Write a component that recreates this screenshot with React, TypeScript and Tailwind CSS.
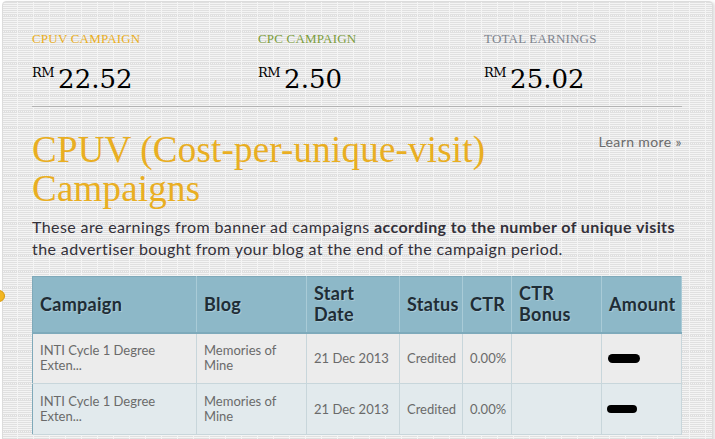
import React from 'react';

const serif = "font-['Liberation_Serif',serif]";
const figure = "font-['DejaVu_Serif',serif]";
const sans = "font-['Lato','Open_Sans',sans-serif]";

type Row = {
  campaign: string[];
  blog: string[];
  date: string;
  status: string;
  ctr: string;
  blob: string;
  bg: string;
};

const rows: Row[] = [
  {
    campaign: ['INTI Cycle 1 Degree', 'Exten...'],
    blog: ['Memories of', 'Mine'],
    date: '21 Dec 2013',
    status: 'Credited',
    ctr: '0.00%',
    blob: 'w-[32px] h-[9px] ml-[-1px]',
    bg: 'bg-[#ececec]',
  },
  {
    campaign: ['INTI Cycle 1 Degree', 'Exten...'],
    blog: ['Memories of', 'Mine'],
    date: '21 Dec 2013',
    status: 'Credited',
    ctr: '0.00%',
    blob: 'w-[30px] h-[8px] ml-[-2px]',
    bg: 'bg-[#e2eaed]',
  },
];

const Stat: React.FC<{ label: string; color: string; amount: string }> = ({ label, color, amount }) => (
  <div>
    <div className={`${serif} text-[13px] leading-[15px] tracking-[0.2px] ${color}`}>{label}</div>
    <div className={`${figure} mt-[17px] flex items-start text-black`}>
      <span className="mt-[2px] mr-[4px] text-[13px] leading-4 tracking-[-0.5px]">RM</span>
      <span className="text-[26px] leading-[32px]">{amount}</span>
    </div>
  </div>
);

const headCell = 'border-r border-[#a9cbd7] px-[7px] text-left align-middle font-bold text-[18px] leading-[21px] tracking-[0.3px] text-[#1f2d36] [text-shadow:1px_1px_0_rgba(255,255,255,0.25)]';
const bodyCell = 'border-r border-b border-[#c8d6db] px-[7px] align-middle text-[13px] leading-[15px] text-[#6a6a6a]';

const App: React.FC = () => {
  return (
    <div className="relative min-h-screen overflow-hidden bg-white">
      <div className="ml-[2px] mt-[1px] w-[711px] rounded-t-[4px] border border-[#dcdcdc] bg-[#f4f4f4] bg-[conic-gradient(from_90deg_at_1px_1px,transparent_75%,#e0e0e0_0),conic-gradient(from_90deg_at_1px_1px,transparent_75%,#e0e0e0_0)] bg-size-[16px_2px,2px_16px] bg-position-[14px_0px,0px_13px] px-[29px] pt-[29px] pb-10 shadow-[2px_1px_3px_rgba(0,0,0,0.12)]">
        <div className="grid w-[650px] grid-cols-3 gap-x-[28px]">
          <Stat label="CPUV CAMPAIGN" color="text-[#eaae22]" amount="22.52" />
          <Stat label="CPC CAMPAIGN" color="text-[#7d9d3c]" amount="2.50" />
          <Stat label="TOTAL EARNINGS" color="text-[#7d838d]" amount="25.02" />
        </div>
        <div className="mt-[11px] w-[650px] border-t border-[#b3b3b3]" />

        <div className="mt-[23px] flex w-[650px] items-start justify-between">
          <h2 className={`${serif} text-[37px] leading-[39px] tracking-[0.2px] text-[#e9ae22]`}>
            CPUV (Cost-per-unique-visit)
            <br />
            Campaigns
          </h2>
          <a className={`${sans} mt-[3px] text-[14px] leading-[18px] tracking-[0.4px] text-[#6b6b6b]`}>Learn more »</a>
        </div>

        <p className={`${sans} mt-[8px] text-[16px] leading-[22px] tracking-[0.4px] text-[#333039]`}>
          These are earnings from banner ad campaigns <b className="font-bold">according to the number of unique visits</b>
          <br />
          the advertiser bought from your blog at the end of the campaign period.
        </p>

        <table className={`${sans} mt-[16px] w-[649px] table-fixed border-collapse border border-[#7fa9b9]`}>
          <colgroup>
            <col className="w-[164px]" />
            <col className="w-[110px]" />
            <col className="w-[93px]" />
            <col className="w-[63px]" />
            <col className="w-[49px]" />
            <col className="w-[90px]" />
            <col className="w-[80px]" />
          </colgroup>
          <thead>
            <tr className="h-[56px] border-b-2 border-[#7eaabb] bg-[#8db8c8]">
              <th className={headCell}>Campaign</th>
              <th className={headCell}>Blog</th>
              <th className={headCell}>Start<br />Date</th>
              <th className={`${headCell} px-[5px]`}>Status</th>
              <th className={`${headCell} px-[5px]`}>CTR</th>
              <th className={`${headCell} px-[6px]`}>CTR<br />Bonus</th>
              <th className={`${headCell} px-[6px]`}>Amount</th>
            </tr>
          </thead>
          <tbody>
            {rows.map((r, i) => (
              <tr key={i} className={`h-[51px] ${r.bg}`}>
                <td className={bodyCell}>{r.campaign[0]}<br />{r.campaign[1]}</td>
                <td className={bodyCell}>{r.blog[0]}<br />{r.blog[1]}</td>
                <td className={bodyCell}>{r.date}</td>
                <td className={`${bodyCell} px-[6px]`}>{r.status}</td>
                <td className={`${bodyCell} px-[6px]`}>{r.ctr}</td>
                <td className={bodyCell}></td>
                <td className={`${bodyCell} px-[6px]`}>
                  <div className={`rounded-full bg-black ${r.blob}`} />
                </td>
              </tr>
            ))}
          </tbody>
        </table>
      </div>
      <div className="absolute left-[-7px] top-[290px] h-[12px] w-[12px] rounded-full border border-[#d89a10] bg-[#f2b620]" />
    </div>
  );
};

export default App;
